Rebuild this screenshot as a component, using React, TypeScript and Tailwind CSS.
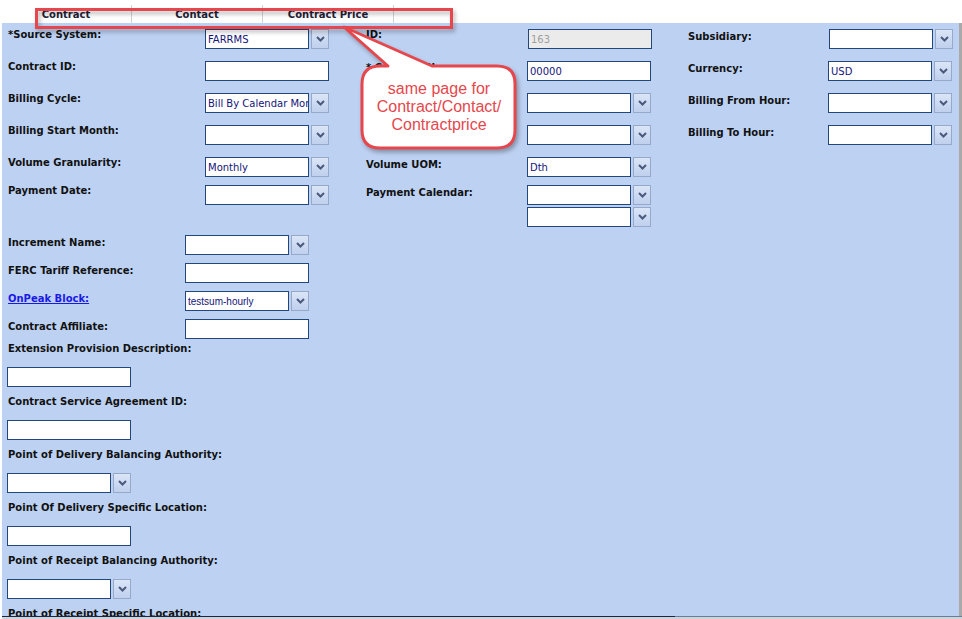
import type { ReactNode } from 'react';

function DropBtn() {
    return (
        <div className="ml-[2px] w-[18px] h-5 shrink-0 border border-[#97a9c8] bg-gradient-to-b from-[#dbe5f7] to-[#bfd0ee] flex items-center justify-center">
            <svg width="9" height="6" viewBox="0 0 9 6">
                <path d="M1 1 L4.5 4.5 L8 1" fill="none" stroke="#4b5a7c" strokeWidth="2" />
            </svg>
        </div>
    );
}

function TextBox({ value = '', disabled = false, className = '' }: { value?: string; disabled?: boolean; className?: string }) {
    return (
        <div
            className={`w-[124px] h-5 border border-[#23477a] flex items-center pl-[2px] text-[10px] overflow-hidden whitespace-nowrap ${
                disabled ? 'bg-[#ebebeb] text-[#a0a0a0]' : 'bg-white text-[#14147a]'
            } ${className}`}
        >
            {value}
        </div>
    );
}

function Select({ value = '', className = '', valueClass = '' }: { value?: string; className?: string; valueClass?: string }) {
    return (
        <div className={`flex ${className}`}>
            <div className={`w-[104px] h-5 border border-[#23477a] bg-white flex items-center pl-[2px] text-[10px] text-[#14147a] overflow-hidden whitespace-nowrap ${valueClass}`}>
                {value}
            </div>
            <DropBtn />
        </div>
    );
}

function Cell({ label, width, labelWidth, pad = '', children }: { label: string; width: string; labelWidth: string; pad?: string; children?: ReactNode }) {
    return (
        <div className={`flex items-start ${width}`}>
            <div className={`${labelWidth} ${pad} shrink-0 text-[10px] font-bold leading-3 text-[#111]`}>{label}</div>
            <div className="flex flex-col gap-[2px]">{children}</div>
        </div>
    );
}

function TopRow({ h, a, b, c }: { h: string; a: ReactNode; b?: ReactNode; c?: ReactNode }) {
    return (
        <div className={`flex ${h}`}>
            {a}
            {b}
            {c}
        </div>
    );
}

const c1 = { width: 'w-[358px]', labelWidth: 'w-[197px]' };
const c2 = { width: 'w-[322px]', labelWidth: 'w-[161px]', pad: 'pt-[1px]' };
const c3 = { width: 'w-[270px]', labelWidth: 'w-[140px]', pad: 'pt-[2px]' };

function SideRow({ label, link = false, children }: { label: string; link?: boolean; children: ReactNode }) {
    return (
        <div className="flex items-start">
            <div
                className={`w-[177px] pt-[2px] shrink-0 text-[10px] font-bold leading-3 ${
                    link ? 'text-[#1a1ae6] underline' : 'text-[#111]'
                }`}
            >
                {label}
            </div>
            {children}
        </div>
    );
}

function Stacked({ label, select = false, first = false }: { label: string; select?: boolean; first?: boolean }) {
    return (
        <div className={`flex flex-col ${first ? 'mt-[4px]' : 'mt-[9px]'}`}>
            <div className="text-[10px] font-bold leading-3 text-[#111]">{label}</div>
            <div className="mt-[12px] -ml-px">{select ? <Select /> : <TextBox />}</div>
        </div>
    );
}

export default function App() {
    return (
        <div className="relative w-[962px] h-[619px] overflow-hidden bg-white font-['DejaVu_Sans',sans-serif]">
            {/* Tabs */}
            <div className="h-[23px] flex items-end pl-px">
                {['Contract', 'Contact', 'Contract Price'].map((t) => (
                    <div
                        key={t}
                        className="w-[131px] h-[18px] border-r border-[#d2d2d2] flex items-center justify-center text-[10px] font-bold text-[#1e2236]"
                    >
                        {t}
                    </div>
                ))}
            </div>

            {/* Form panel */}
            <div className="pl-[2px]">
                <div className="w-[960px] h-[593px] overflow-hidden bg-[#bdd1f2] border-r-[3px] border-[#a9a9a9] pl-[6px] pt-[6px]">
                    <TopRow
                        h="h-8"
                        a={<Cell label="*Source System:" {...c1}><Select value="FARRMS" /></Cell>}
                        b={<Cell label="ID:" {...c2} pad=""><TextBox value="163" disabled className="ml-px" /></Cell>}
                        c={<Cell label="Subsidiary:" {...c3}><Select className="ml-px" /></Cell>}
                    />
                    <TopRow
                        h="h-8"
                        a={<Cell label="Contract ID:" {...c1}><TextBox /></Cell>}
                        b={<Cell label="* Contract Name:" {...c2} pad="pt-[1px]"><TextBox value="00000" /></Cell>}
                        c={<Cell label="Currency:" {...c3}><Select value="USD" /></Cell>}
                    />
                    <TopRow
                        h="h-8"
                        a={<Cell label="Billing Cycle:" {...c1}><Select value="Bill By Calendar Month" /></Cell>}
                        b={<Cell label="Contract Type:" {...c2}><Select /></Cell>}
                        c={<Cell label="Billing From Hour:" {...c3}><Select /></Cell>}
                    />
                    <TopRow
                        h="h-8"
                        a={<Cell label="Billing Start Month:" {...c1}><Select /></Cell>}
                        b={<Cell label="Contract Status:" {...c2}><Select /></Cell>}
                        c={<Cell label="Billing To Hour:" {...c3}><Select /></Cell>}
                    />
                    <TopRow
                        h="h-7"
                        a={<Cell label="Volume Granularity:" {...c1}><Select value="Monthly" valueClass="text-[#3232a8]" /></Cell>}
                        b={<Cell label="Volume UOM:" {...c2} pad="pt-[2px]"><Select value="Dth" /></Cell>}
                    />
                    <TopRow
                        h="h-[42px]"
                        a={<Cell label="Payment Date:" {...c1}><Select /></Cell>}
                        b={
                            <Cell label="Payment Calendar:" {...c2} pad="pt-[2px]">
                                <Select />
                                <Select />
                            </Cell>
                        }
                    />

                    <div className="mt-2 flex flex-col gap-2">
                        <SideRow label="Increment Name:"><Select /></SideRow>
                        <SideRow label="FERC Tariff Reference:"><TextBox /></SideRow>
                        <SideRow label="OnPeak Block:" link>
                            <Select value="testsum-hourly" valueClass="font-['Liberation_Sans',sans-serif] text-[#111]" />
                        </SideRow>
                        <SideRow label="Contract Affiliate:"><TextBox /></SideRow>
                    </div>

                    <Stacked label="Extension Provision Description:" first />
                    <Stacked label="Contract Service Agreement ID:" />
                    <Stacked label="Point of Delivery Balancing Authority:" select />
                    <Stacked label="Point Of Delivery Specific Location:" />
                    <Stacked label="Point of Receipt Balancing Authority:" select />
                    <Stacked label="Point of Receipt Specific Location:" />
                </div>
                <div className="flex h-[3px]">
                    <div className="w-[673px] border-t border-[#1b2640] bg-[#cfd3da]" />
                    <div className="flex-1 border-t border-[#6a7c9c] bg-[#cfd3da]" />
                </div>
            </div>

            {/* Annotation overlay */}
            <svg className="absolute left-0 top-0 pointer-events-none drop-shadow-[2px_3px_2px_rgba(0,0,0,0.3)]" width="962" height="619">
                <rect x="36.5" y="9.5" width="415" height="18" fill="none" stroke="#e5474c" strokeWidth="3" />
                <path
                    d="M380 66 L388 66 L344 27 L432 66 L497 66 Q515 66 515 84 L515 130 Q515 148 497 148 L380 148 Q362 148 362 130 L362 84 Q362 66 380 66 Z"
                    fill="white"
                    stroke="#e5474c"
                    strokeWidth="3"
                    strokeLinejoin="round"
                />
            </svg>
            <div className="absolute left-[362px] top-[80px] w-[154px] text-center text-[16px] leading-[18px] text-[#e5474c] font-['Liberation_Sans',sans-serif]">
                same page for
                <br />
                Contract/Contact/
                <br />
                Contractprice
            </div>
        </div>
    );
}
